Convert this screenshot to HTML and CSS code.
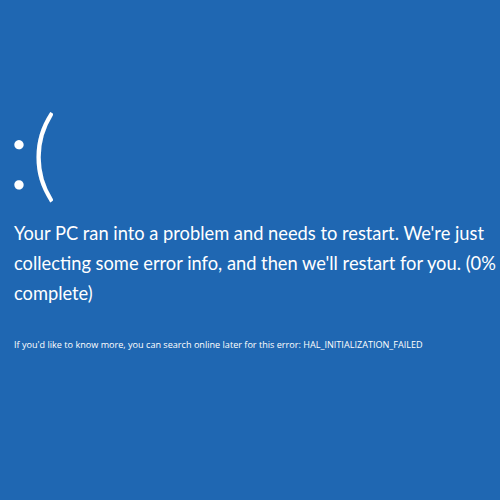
FILE: index.html
```html
<!DOCTYPE html>
<html>
<head>
<meta charset="utf-8">
<link rel="stylesheet" href="styles.css">
</head>
<body>
<main class="screen">
  <div class="face">:(</div>
  <p class="message">Your PC ran into a problem and needs to restart. We're just collecting some error info, and then we'll restart for you. (0% complete)</p>
  <p class="info">If you'd like to know more, you can search online later for this error: HAL_INITIALIZATION_FAILED</p>
</main>
</body>
</html>
```
FILE: styles.css
```css
html, body {
  margin: 0;
  padding: 0;
  width: 500px;
  height: 500px;
  background: #1f67b2;
  overflow: hidden;
}
.screen {
  padding: 90px 0 0 9px;
  color: #ffffff;
  font-family: "Open Sans", "Noto Sans", sans-serif;
}
.face {
  font-family: "Lato", sans-serif;
  font-size: 100px;
  line-height: 120px;
  font-weight: 300;
  margin: 0 0 0 -2px;
}
.message {
  margin: 8px 0 0 5px;
  font-family: "Lato", sans-serif;
  font-size: 18.3px;
  line-height: 30px;
  width: 486px;
}
.info {
  margin: 31px 0 0 5px;
  font-size: 9.1px;
  line-height: 12px;
}
```
